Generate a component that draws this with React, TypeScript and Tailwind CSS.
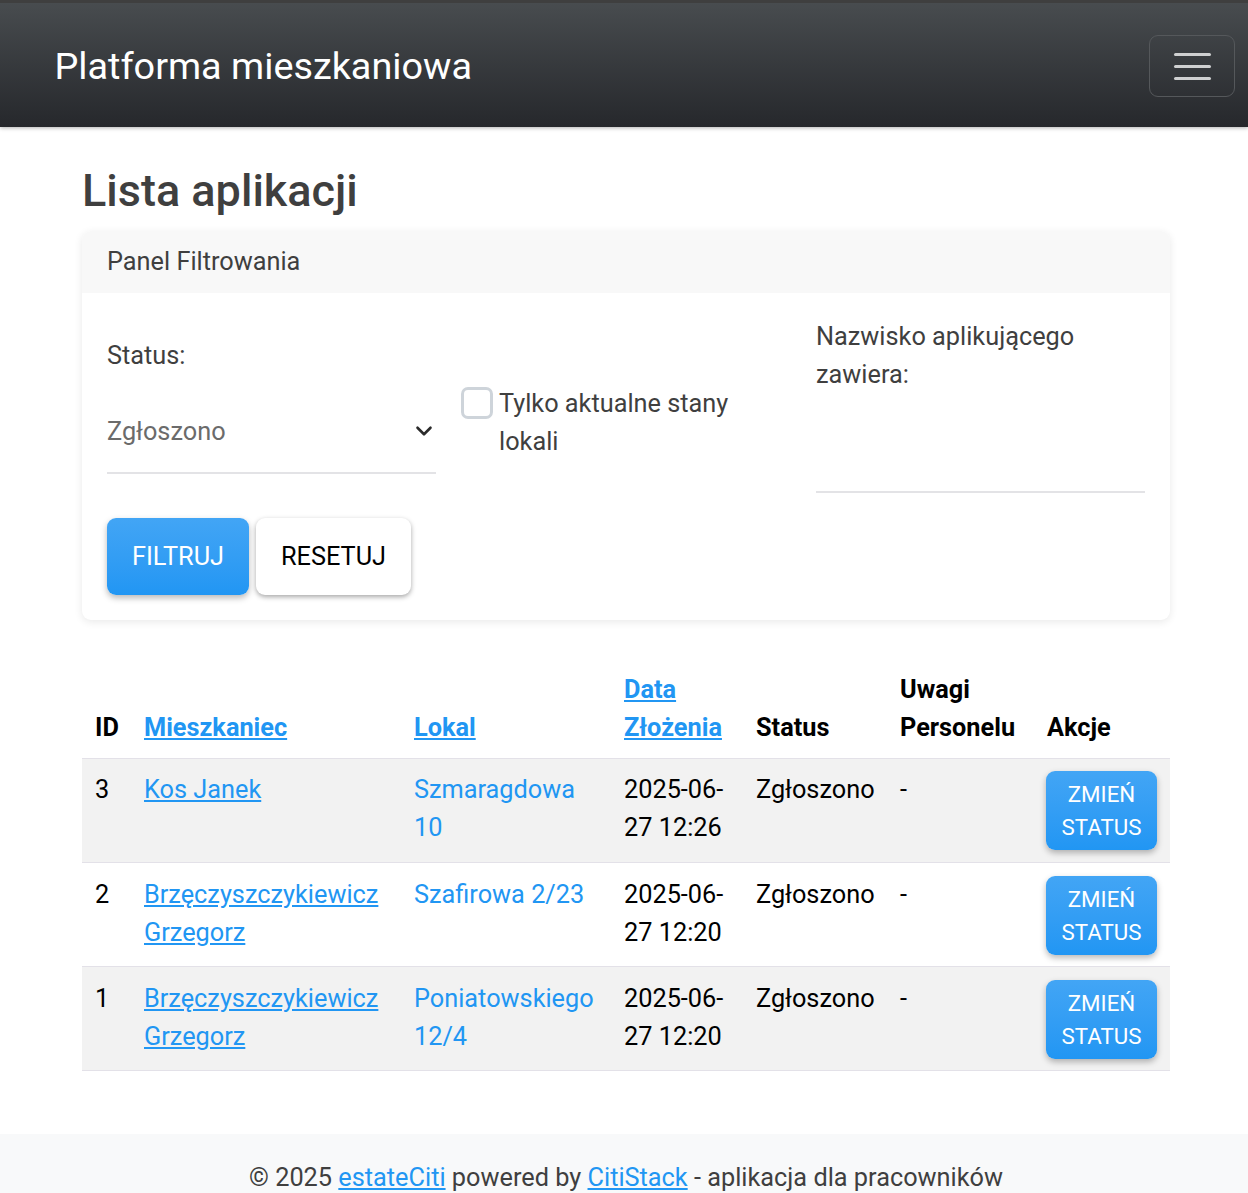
import { ChevronDown } from 'lucide-react';

const rows = [
  { id: 3, name: ['Kos Janek'], lokal: 'Szmaragdowa 10', date: '2025-06-27 12:26', shaded: true, cell: 'px-[13px] pt-[12px] pb-[12px] align-top' },
  { id: 2, name: ['Brzęczyszczykiewicz', 'Grzegorz'], lokal: 'Szafirowa 2/23', date: '2025-06-27 12:20', shaded: false, cell: 'px-[13px] pt-[13px] pb-[11px] align-top' },
  { id: 1, name: ['Brzęczyszczykiewicz', 'Grzegorz'], lokal: 'Poniatowskiego 12/4', date: '2025-06-27 12:20', shaded: true, cell: 'px-[13px] pt-[13px] pb-[11px] align-top' },
];

const link = 'text-[#2196f3] underline';
const blueBtn = 'rounded-[9px] bg-gradient-to-b from-[#42a5f5] to-[#2196f3] text-white shadow-[0_3px_6px_rgba(0,0,0,0.28)]';

export default function App() {
  return (
    <div className="h-[1193px] overflow-hidden bg-white font-['Roboto',sans-serif] text-[25.3px] leading-[37.5px] text-[#3f3f3f]">
      <nav className="flex h-[127px] items-center justify-between border-t-[3px] border-[#3f3f3f] bg-gradient-to-b from-[#484c4f] to-[#26282c] pt-[2px] pr-[13px] pl-[54.5px] shadow-[0_1px_4px_rgba(0,0,0,0.3)]">
        <span className="text-[37.8px] leading-[56px] text-white">Platforma mieszkaniowa</span>
        <button className="flex h-[62px] w-[86px] flex-col items-center justify-center gap-[9px] rounded-[9px] border border-[#55585b]">
          <span className="h-[3px] w-[37px] rounded-sm bg-[#cfd0d1]" />
          <span className="h-[3px] w-[37px] rounded-sm bg-[#cfd0d1]" />
          <span className="h-[3px] w-[37px] rounded-sm bg-[#cfd0d1]" />
        </button>
      </nav>

      <main className="ml-[82px] w-[1088px]">
        <h1 className="pt-[37px] pb-[13px] text-[45px] leading-[54px] font-medium">Lista aplikacji</h1>

        <section className="overflow-hidden rounded-[9px] bg-white shadow-[0_2px_8px_rgba(0,0,0,0.09)]">
          <div className="flex h-[62px] items-center bg-[#f8f8f8] px-[25px]">Panel Filtrowania</div>
          <div className="px-[25px] pt-[25px] pb-[25px]">
            <div className="grid grid-cols-[329px_330px_329px] items-center gap-x-[25px]">
              <div>
                <label className="mb-[19px] block">Status:</label>
                <div className="relative">
                  <select className="h-[80px] w-full appearance-none border-b-2 border-[#e3e3e6] pb-[3px] text-[#6b6b6b] outline-none">
                    <option>Zgłoszono</option>
                  </select>
                  <ChevronDown className="absolute top-[24px] -right-[1px] h-[26px] w-[26px] text-[#2b2b2b]" strokeWidth={2.4} />
                </div>
              </div>
              <label className="mt-[34px] flex items-start gap-[6px]">
                <span className="mt-[2px] h-[32px] w-[32px] shrink-0 rounded-[7px] border-[3px] border-[#ced4da] bg-white" />
                <span className="w-[240px]">Tylko aktualne stany lokali</span>
              </label>
              <div>
                <label className="block">Nazwisko aplikującego zawiera:</label>
                <input className="h-[100px] w-full border-b-2 border-[#e3e3e6] outline-none" />
              </div>
            </div>
            <div className="mt-[25px] flex gap-[7px]">
              <button className={`h-[77px] w-[142px] ${blueBtn}`}>FILTRUJ</button>
              <button className="h-[77px] w-[155px] rounded-[9px] bg-white text-black shadow-[0_2px_5px_rgba(0,0,0,0.35)]">RESETUJ</button>
            </div>
          </div>
        </section>

        <table className="mt-[51px] w-[1088px] table-fixed border-collapse text-black">
          <colgroup>
            <col className="w-[49px]" />
            <col className="w-[270px]" />
            <col className="w-[210px]" />
            <col className="w-[132px]" />
            <col className="w-[144px]" />
            <col className="w-[147px]" />
            <col className="w-[136px]" />
          </colgroup>
          <thead>
            <tr className="border-b border-[#e3e1e8] font-bold">
              <th className="px-[13px] pb-[12px] text-left align-bottom">ID</th>
              <th className="px-[13px] pb-[12px] text-left align-bottom"><a className={link}>Mieszkaniec</a></th>
              <th className="px-[13px] pb-[12px] text-left align-bottom"><a className={link}>Lokal</a></th>
              <th className="px-[13px] pb-[12px] text-left align-bottom"><a className={link}>Data Złożenia</a></th>
              <th className="px-[13px] pb-[12px] text-left align-bottom">Status</th>
              <th className="px-[13px] pb-[12px] text-left align-bottom">Uwagi Personelu</th>
              <th className="px-[13px] pb-[12px] text-left align-bottom">Akcje</th>
            </tr>
          </thead>
          <tbody>
            {rows.map((row) => (
              <tr key={row.id} className={row.shaded ? 'border-b border-[#e3e1e8] bg-[#f2f2f2]' : 'border-b border-[#e3e1e8]'}>
                <td className={row.cell}>{row.id}</td>
                <td className={row.cell}>
                  <a className={link}>
                    {row.name[0]}
                    {row.name[1] && <br />}
                    {row.name[1]}
                  </a>
                </td>
                <td className={row.cell}><span className="text-[#2196f3]">{row.lokal}</span></td>
                <td className={row.cell}>{row.date}</td>
                <td className={row.cell}>Zgłoszono</td>
                <td className={row.cell}>-</td>
                <td className={row.cell}>
                  <button className={`block h-[79px] w-[111px] -translate-x-[1px] text-[22.3px] leading-[33px] ${blueBtn}`}>ZMIEŃ STATUS</button>
                </td>
              </tr>
            ))}
          </tbody>
        </table>
      </main>

      <footer className="mt-[63px] bg-[#f8f9fa] pt-[25px] pb-[25px] pl-[4px] text-center">
        © 2025 <a className={link}>estateCiti</a> powered by <a className={link}>CitiStack</a> - aplikacja dla pracowników
      </footer>
    </div>
  );
}
